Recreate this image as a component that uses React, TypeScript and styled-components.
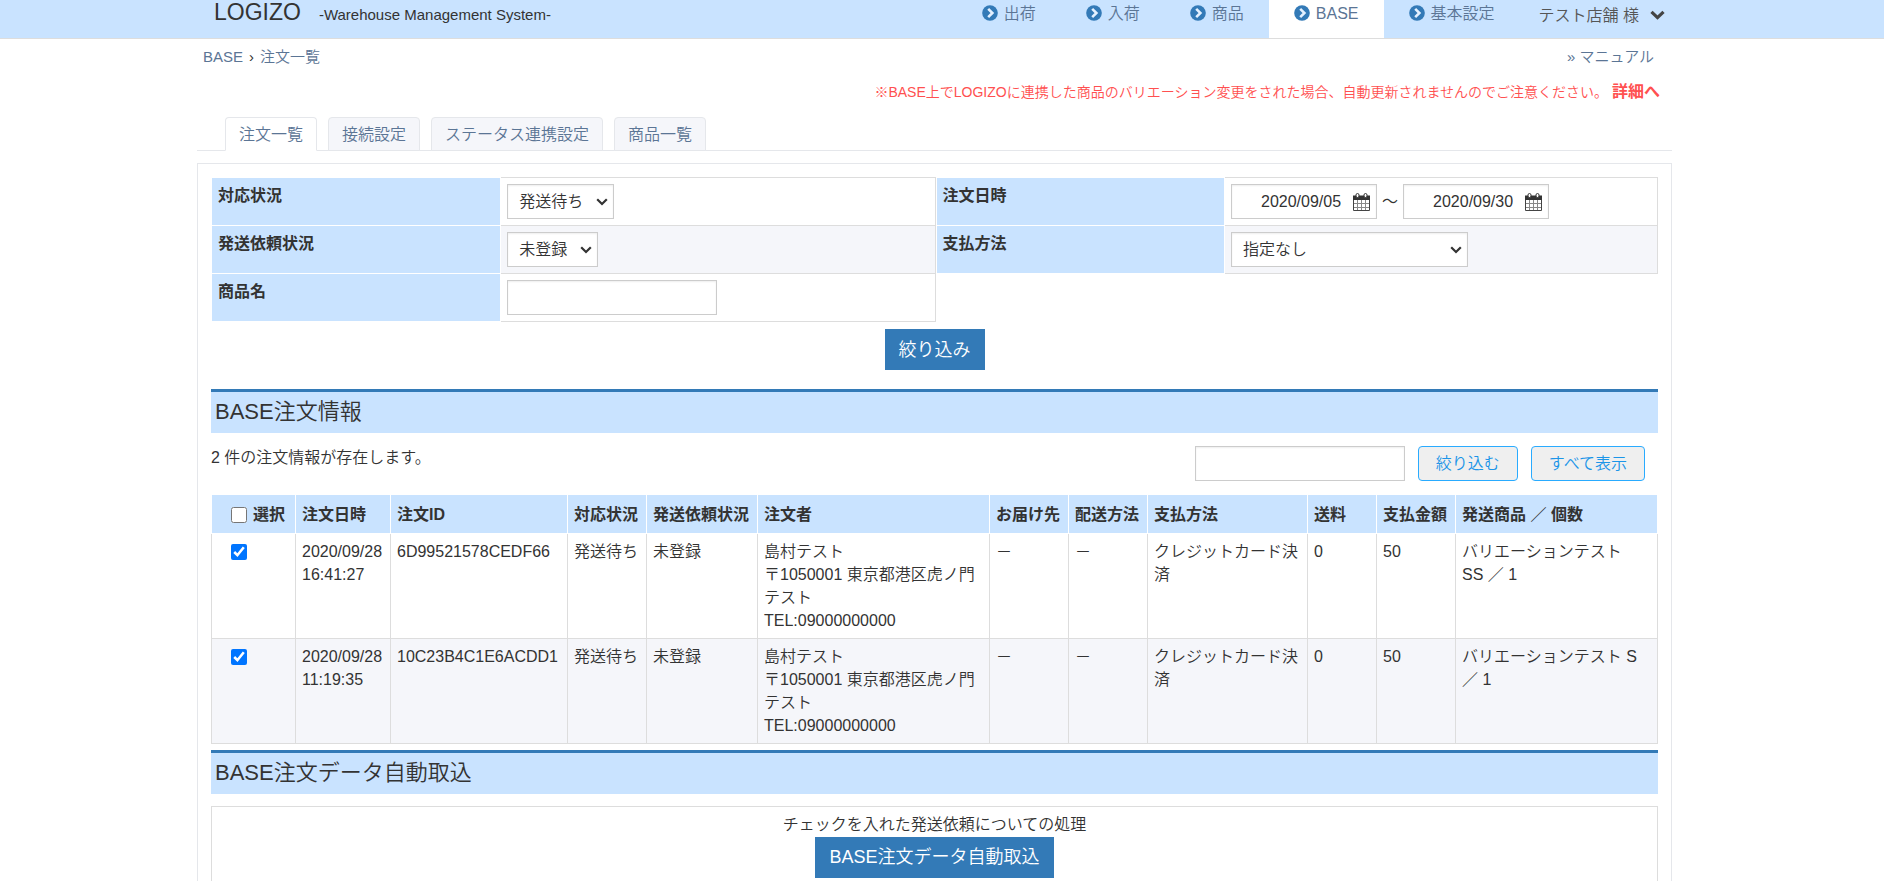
import React from "react";
import styled, { createGlobalStyle } from "styled-components";

const GlobalStyle = createGlobalStyle`
  *, *::before, *::after { box-sizing: border-box; }
  body {
    margin: 0;
    background: #fff;
    color: #333;
    font: 350 16px/23px "Liberation Sans", "Noto Sans CJK JP", sans-serif;
  }
  a { color: #5b7595; text-decoration: none; }
  input, select, button { font: inherit; color: inherit; }
`;

const Header = styled.header`
  background: #c9e3ff;
  border-bottom: 1px solid #ddd;
  padding-right: 15px;
`;

const HeaderInner = styled.div`
  display: flex;
  justify-content: space-between;
  max-width: 1475px;
  height: 38px;
  margin: 0 auto;
`;

const Brand = styled.div`
  display: flex;
  align-items: baseline;
  gap: 18px;
  padding: 1px 0 0 17px;
`;

const BrandName = styled.span`
  font-size: 23px;
`;

const BrandNote = styled.span`
  font-size: 15px;
`;

const Nav = styled.nav`
  display: flex;
  padding-right: 7px;
`;

const NavItem = styled.a<{ $active?: boolean }>`
  display: flex;
  align-items: center;
  gap: 6px;
  padding: 0 25px 12px;
  background: ${(p) => (p.$active ? "#fff" : "transparent")};
`;

const UserMenu = styled.button`
  display: flex;
  align-items: center;
  gap: 11px;
  padding: 0 0 8px 19px;
  border: 0;
  background: none;
  color: #555;
`;

const Page = styled.div`
  padding-right: 15px;
`;

const Container = styled.main`
  max-width: 1475px;
  margin: 0 auto;
`;

const TopLine = styled.div`
  display: flex;
  justify-content: space-between;
  padding: 6px 18px 0 6px;
  font-size: 15px;
`;

const Crumbs = styled.nav`
  display: flex;
  gap: 6px;
`;

const Warning = styled.p`
  margin: 0;
  padding: 12px 12px 0 0;
  text-align: right;
  color: #ff5050;
  font-size: 14px;
`;

const DetailLink = styled.a`
  margin-left: 4px;
  color: #ff5050;
  font-size: 16px;
  font-weight: bold;
`;

const Tabs = styled.nav`
  display: flex;
  gap: 11px;
  margin-top: 13px;
  padding-left: 28px;
  border-bottom: 1px solid #e5e7eb;
`;

const Tab = styled.a<{ $active?: boolean }>`
  height: 34px;
  margin-bottom: -1px;
  padding: 5px 13px;
  border: 1px solid #e5e7eb;
  border-bottom-color: ${(p) => (p.$active ? "#fff" : "#e5e7eb")};
  border-radius: 4px 4px 0 0;
  background: ${(p) => (p.$active ? "#fff" : "#f5f6fa")};
`;

const Panel = styled.section`
  margin-top: 12px;
  padding: 13px;
  border: 1px solid #e5e7eb;
`;

const Filters = styled.div`
  display: grid;
  grid-template-columns: calc(50% + 2px) 1fr;
  align-items: start;
`;

const FilterRow = styled.div<{ $first?: boolean }>`
  display: grid;
  grid-template-columns: 40% 60%;
  height: ${(p) => (p.$first ? 49 : 48)}px;
`;

const FilterLabel = styled.label`
  padding: 6px;
  border: solid #fff;
  border-width: 0 1px 1px 0;
  background: #c9e3ff;
  font-weight: bold;

  ${FilterRow}:first-child > & { border-top-width: 1px; }
`;

const FilterField = styled.div<{ $shaded?: boolean }>`
  display: flex;
  align-items: center;
  gap: 5px;
  padding: 0 6px;
  border: solid #ddd;
  border-width: 0 1px 1px 0;
  background: ${(p) => (p.$shaded ? "#f5f6fa" : "#fff")};

  ${FilterRow}:first-child > & { border-top-width: 1px; }
`;

const FilterColumn = styled.div<{ $left?: boolean }>`
  ${FilterLabel} { border-left-width: ${(p) => (p.$left ? 1 : 0)}px; }
`;

const SelectBox = styled.span<{ $width: number }>`
  position: relative;
  width: ${(p) => p.$width}px;

  svg {
    position: absolute;
    top: 14px;
    right: 6px;
    pointer-events: none;
  }
`;

const SelectControl = styled.select`
  display: block;
  width: 100%;
  height: 35px;
  padding: 0 11px;
  appearance: none;
  border: 1px solid #ccc;
  border-radius: 0;
  background: #fff;
  box-shadow: inset 0 1px 2px #eee;
`;

const TextInput = styled.input`
  width: 210px;
  height: 35px;
  padding: 0 8px;
  border: 1px solid #ccc;
  background: #fff;
  box-shadow: inset 0 1px 2px #eee;
`;

const DateBox = styled.span`
  display: flex;
  align-items: center;
  width: 146px;
  height: 35px;
  padding-right: 6px;
  border: 1px solid #ccc;
  background: #fff;
  box-shadow: inset 0 1px 2px #eee;
`;

const DateInput = styled.input`
  flex: 1;
  min-width: 0;
  padding: 0 12px 0 0;
  border: 0;
  background: none;
  text-align: right;
`;

const Center = styled.div`
  text-align: center;
`;

const PrimaryButton = styled.button`
  height: 41px;
  padding: 0 14px;
  border: 0;
  background: #337ab7;
  color: #fff;
  font-size: 18px;
`;

const FilterAction = styled(Center)`
  padding: 7px 0 19px;
  line-height: 0;
`;

const Heading = styled.h2`
  margin: 0;
  height: 44px;
  padding: 0 4px;
  border-top: 3px solid #337ab7;
  background: #c9e3ff;
  font-size: 22px;
  font-weight: inherit;
  line-height: 39px;
`;

const ListBar = styled.div`
  display: flex;
  justify-content: space-between;
  padding: 13px 13px 13px 0;
`;

const Search = styled.form`
  display: flex;
  gap: 13px;
`;

const OutlineButton = styled.button`
  height: 35px;
  padding: 0 17px;
  border: 1px solid #29abff;
  border-radius: 4px;
  background: #efefef;
  color: #1b95e8;
`;

const Orders = styled.table`
  width: 100%;
  margin-bottom: 6px;
  table-layout: fixed;
  border-collapse: collapse;
`;

const HeadCell = styled.th`
  padding: 8px 0 7px 6px;
  border: 1px solid #fff;
  background: #c9e3ff;
  text-align: left;
  white-space: nowrap;
`;

const Row = styled.tr`
  background: #fff;
  &:nth-child(even) { background: #f5f6fa; }
`;

const Cell = styled.td`
  height: 105px;
  padding: 6px;
  border: 1px solid #ddd;
  vertical-align: top;

  &:last-child { padding-right: 15px; }
`;

const CheckLabel = styled.label`
  display: flex;
  align-items: center;
  gap: 6px;
  height: 23px;
  padding-left: 13px;
`;

const Checkbox = styled.input`
  width: 16px;
  height: 16px;
  margin: 0;
`;

const ImportBox = styled(Center)`
  margin-top: 12px;
  padding: 6px 0 12px;
  border: 1px solid #ddd;
`;

const ImportText = styled.p`
  margin: 0 0 1px;
`;

const ChevronCircle = () => (
  <svg width="16" height="16" viewBox="0 0 16 16" aria-hidden="true">
    <circle cx="8" cy="8" r="7.8" fill="#337ab7" />
    <path d="M6.200 3.800 10.400 8 6.200 12.200" fill="none" stroke="#e4f1ff" strokeWidth="2.600" />
  </svg>
);

const ChevronDown = () => (
  <svg width="15" height="10" viewBox="0 0 15 10" aria-hidden="true">
    <path d="M1.500 1.800 7.500 7.600 13.500 1.800" fill="none" stroke="#444" strokeWidth="3.200" />
  </svg>
);

const SelectArrow = () => (
  <svg width="12" height="8" viewBox="0 0 12 8" aria-hidden="true">
    <path d="M1.200 1.200 6 6 10.800 1.200" fill="none" stroke="#333" strokeWidth="2.200" />
  </svg>
);

const CalendarIcon = () => (
  <svg width="17" height="18" viewBox="0 0 17 18" aria-hidden="true">
    <path d="M.5 3.500h16v14H.5z" fill="#fff" stroke="#444" />
    <path d="M4.500 7v10M8.500 7v10M12.500 7v10M1 10.500h15M1 14.500h15" fill="none" stroke="#888" />
    <path d="M0 2.500h17V7H0z" fill="#333" />
    <rect x="3" y="0.500" width="3" height="4" rx="1.500" fill="#fff" stroke="#333" />
    <rect x="11" y="0.500" width="3" height="4" rx="1.500" fill="#fff" stroke="#333" />
  </svg>
);

type SelectProps = { id: string; width: number; value: string };

const Select = ({ id, width, value }: SelectProps) => (
  <SelectBox $width={width}>
    <SelectControl id={id}>
      <option>{value}</option>
    </SelectControl>
    <SelectArrow />
  </SelectBox>
);

const columns: [string, number | undefined][] = [
  ["注文日時", 95],
  ["注文ID", 177],
  ["対応状況", 79],
  ["発送依頼状況", 111],
  ["注文者", 232],
  ["お届け先", 79],
  ["配送方法", 79],
  ["支払方法", 160],
  ["送料", 69],
  ["支払金額", 79],
  ["発送商品 ／ 個数", undefined],
];

const orders = [
  { date: "2020/09/28 16:41:27", id: "6D99521578CEDF66", item: "バリエーションテスト SS ／ 1" },
  { date: "2020/09/28 11:19:35", id: "10C23B4C1E6ACDD1", item: "バリエーションテスト S ／ 1" },
];

export default function App() {
  return (
    <>
      <GlobalStyle />
      <Header>
        <HeaderInner>
          <Brand>
            <BrandName>LOGIZO</BrandName>
            <BrandNote>-Warehouse Management System-</BrandNote>
          </Brand>
          <Nav>
            {["出荷", "入荷", "商品", "BASE", "基本設定"].map((name) => (
              <NavItem key={name} href="#" $active={name === "BASE"}>
                <ChevronCircle />
                {name}
              </NavItem>
            ))}
            <UserMenu type="button">
              テスト店舗 様
              <ChevronDown />
            </UserMenu>
          </Nav>
        </HeaderInner>
      </Header>
      <Page>
        <Container>
          <TopLine>
            <Crumbs>
              <a href="#">BASE</a>
              <span>›</span>
              <a href="#">注文一覧</a>
            </Crumbs>
            <a href="#">» マニュアル</a>
          </TopLine>
          <Warning>
            ※BASE上でLOGIZOに連携した商品のバリエーション変更をされた場合、自動更新されませんのでご注意ください。
            <DetailLink href="#">詳細へ</DetailLink>
          </Warning>
          <Tabs>
            <Tab href="#" $active>注文一覧</Tab>
            <Tab href="#">接続設定</Tab>
            <Tab href="#">ステータス連携設定</Tab>
            <Tab href="#">商品一覧</Tab>
          </Tabs>
          <Panel>
            <Filters>
              <FilterColumn $left>
                <FilterRow $first>
                  <FilterLabel htmlFor="status">対応状況</FilterLabel>
                  <FilterField>
                    <Select id="status" width={107} value="発送待ち" />
                  </FilterField>
                </FilterRow>
                <FilterRow>
                  <FilterLabel htmlFor="request">発送依頼状況</FilterLabel>
                  <FilterField $shaded>
                    <Select id="request" width={91} value="未登録" />
                  </FilterField>
                </FilterRow>
                <FilterRow>
                  <FilterLabel htmlFor="product">商品名</FilterLabel>
                  <FilterField>
                    <TextInput id="product" type="text" />
                  </FilterField>
                </FilterRow>
              </FilterColumn>
              <FilterColumn>
                <FilterRow $first>
                  <FilterLabel htmlFor="from">注文日時</FilterLabel>
                  <FilterField>
                    <DateBox>
                      <DateInput id="from" type="text" defaultValue="2020/09/05" />
                      <CalendarIcon />
                    </DateBox>
                    <span>～</span>
                    <DateBox>
                      <DateInput aria-label="注文日時" type="text" defaultValue="2020/09/30" />
                      <CalendarIcon />
                    </DateBox>
                  </FilterField>
                </FilterRow>
                <FilterRow>
                  <FilterLabel htmlFor="payment">支払方法</FilterLabel>
                  <FilterField $shaded>
                    <Select id="payment" width={237} value="指定なし" />
                  </FilterField>
                </FilterRow>
              </FilterColumn>
            </Filters>
            <FilterAction>
              <PrimaryButton type="button">絞り込み</PrimaryButton>
            </FilterAction>
            <Heading>BASE注文情報</Heading>
            <ListBar>
              <span>2 件の注文情報が存在します。</span>
              <Search onSubmit={(e) => e.preventDefault()}>
                <TextInput type="text" aria-label="絞り込む" />
                <OutlineButton type="submit">絞り込む</OutlineButton>
                <OutlineButton type="reset">すべて表示</OutlineButton>
              </Search>
            </ListBar>
            <Orders>
              <colgroup>
                <col width={84} />
                {columns.map(([name, width]) => <col key={name} width={width} />)}
              </colgroup>
              <thead>
                <tr>
                  <HeadCell>
                    <CheckLabel><Checkbox type="checkbox" />選択</CheckLabel>
                  </HeadCell>
                  {columns.map(([name]) => <HeadCell key={name}>{name}</HeadCell>)}
                </tr>
              </thead>
              <tbody>
                {orders.map((order) => (
                  <Row key={order.id}>
                    <Cell>
                      <CheckLabel>
                        <Checkbox type="checkbox" defaultChecked aria-label={order.id} />
                      </CheckLabel>
                    </Cell>
                    <Cell>{order.date}</Cell>
                    <Cell>{order.id}</Cell>
                    <Cell>発送待ち</Cell>
                    <Cell>未登録</Cell>
                    <Cell>
                      島村テスト<br />
                      〒1050001 東京都港区虎ノ門<br />
                      テスト<br />
                      TEL:09000000000
                    </Cell>
                    <Cell>－</Cell>
                    <Cell>－</Cell>
                    <Cell>クレジットカード決済</Cell>
                    <Cell>0</Cell>
                    <Cell>50</Cell>
                    <Cell>{order.item}</Cell>
                  </Row>
                ))}
              </tbody>
            </Orders>
            <Heading>BASE注文データ自動取込</Heading>
            <ImportBox>
              <ImportText>チェックを入れた発送依頼についての処理</ImportText>
              <PrimaryButton type="button">BASE注文データ自動取込</PrimaryButton>
            </ImportBox>
          </Panel>
        </Container>
      </Page>
    </>
  );
}
